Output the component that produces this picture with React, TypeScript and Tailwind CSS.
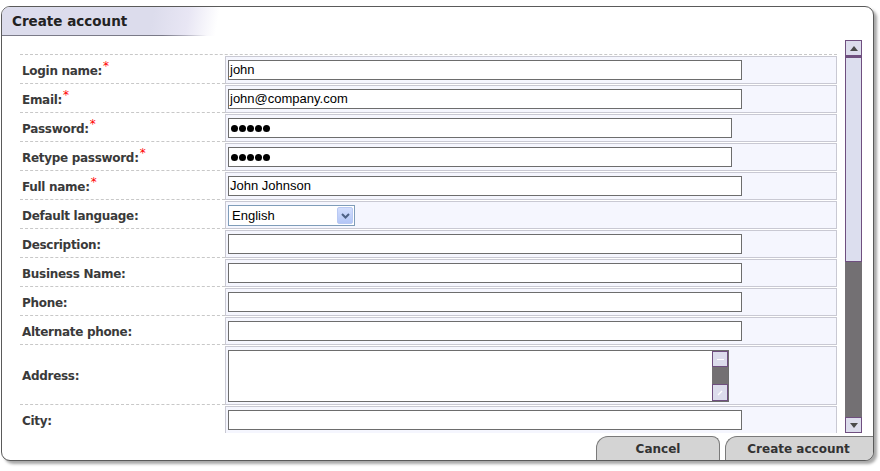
import React from "react";

type Row = {
  label: string;
  req?: boolean;
  kind: "text" | "pw" | "select" | "area";
  value?: string;
  w?: number;
};

const rows: Row[] = [
  { label: "Login name:", req: true, kind: "text", value: "john", w: 514 },
  { label: "Email:", req: true, kind: "text", value: "john@company.com", w: 514 },
  { label: "Password:", req: true, kind: "pw", w: 504 },
  { label: "Retype password:", req: true, kind: "pw", w: 504 },
  { label: "Full name:", req: true, kind: "text", value: "John Johnson", w: 514 },
  { label: "Default language:", kind: "select" },
  { label: "Description:", kind: "text", value: "", w: 514 },
  { label: "Business Name:", kind: "text", value: "", w: 514 },
  { label: "Phone:", kind: "text", value: "", w: 514 },
  { label: "Alternate phone:", kind: "text", value: "", w: 514 },
  { label: "Address:", kind: "area" },
  { label: "City:", kind: "text", value: "", w: 514 },
];

const labelFont = { fontFamily: '"DejaVu Sans", Verdana, sans-serif' };
const inputFont = { fontFamily: '"Liberation Sans", Arial, sans-serif' };

function Field({ row }: { row: Row }) {
  if (row.kind === "text") {
    return (
      <div
        className="h-[20px] border border-[#6d6d6d] bg-white text-[13px] leading-[18px] text-black pl-[1px] overflow-hidden whitespace-nowrap"
        style={{ ...inputFont, width: row.w }}
      >
        {row.value}
      </div>
    );
  }
  if (row.kind === "pw") {
    return (
      <div
        className="h-[20px] border border-[#6d6d6d] bg-white flex items-center gap-[1px] pl-[2px]"
        style={{ width: row.w }}
      >
        {[0, 1, 2, 3, 4].map((i) => (
          <span key={i} className="block w-[7px] h-[7px] rounded-full bg-black" />
        ))}
      </div>
    );
  }
  if (row.kind === "select") {
    return (
      <div className="w-[127px] h-[21px] border border-[#7f9db9] bg-white flex items-center justify-between" style={inputFont}>
        <span className="pl-[3px] text-[13px] text-black leading-[19px]">English</span>
        <span className="mr-[1px] w-[16px] h-[17px] rounded-[2px] border border-[#b9c9f3] bg-gradient-to-b from-[#d3defd] to-[#b3c6f6] flex items-center justify-center">
          <svg width="9" height="6" viewBox="0 0 9 6">
            <path d="M1 1 L4.5 4.5 L8 1" stroke="#4d6185" strokeWidth="2" fill="none" />
          </svg>
        </span>
      </div>
    );
  }
  return (
    <div className="w-[501px] h-[52px] border border-[#6d6d6d] bg-white flex justify-end">
      <div className="w-[16px] h-full bg-[#737073] flex flex-col justify-between">
        <div className="h-[16px] bg-[#dcdcec] border border-[#6f4f7f] flex items-center justify-center">
          <span className="block w-[7px] h-[1px] bg-white" />
        </div>
        <div className="h-[17px] bg-[#dcdcec] border border-[#6f4f7f] flex items-center justify-center">
          <svg width="6" height="6" viewBox="0 0 6 6">
            <path d="M1 5 L5 1" stroke="white" strokeWidth="1.2" />
          </svg>
        </div>
      </div>
    </div>
  );
}

function FormRow({ row }: { row: Row }) {
  const tall = row.kind === "area";
  return (
    <div className={`flex ${tall ? "h-[60px]" : "h-[29px]"}`}>
      <div className="w-[205px] border-b border-dashed border-[#c8c8c8] flex items-center pl-[2px] pt-[3px]">
        <span className="text-[12px] font-bold text-[#3a3a3a] tracking-[-0.3px]" style={labelFont}>
          {row.label}
          {row.req && <span className="text-[#ff0000] text-[12px] font-normal relative top-[-5px] ml-[1px]">*</span>}
        </span>
      </div>
      <div className="flex-1 pt-[1px]">
        <div className={`${tall ? "h-[59px]" : "h-[28px]"} border border-[#c9c9d3] bg-[#f5f6fe] pl-[2px] pt-[3px]`}>
          <Field row={row} />
        </div>
      </div>
    </div>
  );
}

function Triangle({ up }: { up: boolean }) {
  return (
    <svg width="8" height="5" viewBox="0 0 8 5">
      <path d={up ? "M0 5 L4 0 L8 5 Z" : "M0 0 L4 5 L8 0 Z"} fill="#4a4a4a" />
    </svg>
  );
}

export default function App() {
  return (
    <div className="w-[880px] h-[471px] bg-white overflow-hidden">
      <div className="ml-[1px] mt-[6px] w-[873px] h-[455px] rounded-[9px] border border-[#5a5a5a] bg-white overflow-hidden flex flex-col shadow-[3px_3px_3px_rgba(0,0,0,0.35)]">
        {/* header */}
        <div className="relative h-[29px] shrink-0">
          <div className="absolute inset-0 bg-[linear-gradient(100deg,#dcdcec_0px,#dcdcec_150px,#e8e6f4_185px,rgba(255,255,255,0)_215px)]" />
          <div className="absolute left-0 right-0 bottom-0 h-[1px] bg-[linear-gradient(90deg,#7a7a88_0px,#7a7a88_160px,rgba(255,255,255,0)_205px)]" />
          <div className="relative pl-[10px] pt-[5px] text-[13.5px] font-bold text-[#222] leading-[18px]" style={labelFont}>
            Create account
          </div>
        </div>
        {/* body */}
        <div className="h-[397px] shrink-0 flex">
          <div className="w-[835px] pl-[18px] pt-[18px] overflow-hidden">
            <div className="border-t border-dashed border-[#c8c8c8]">
              {rows.map((r) => (
                <FormRow key={r.label} row={r} />
              ))}
            </div>
          </div>
          <div className="ml-[8px] mt-[4px] w-[17px] h-[393px] flex flex-col bg-[#737073]">
            <div className="h-[16px] bg-[#dcdcec] border border-[#6f4f7f] flex items-center justify-center">
              <Triangle up />
            </div>
            <div className="h-[206px] bg-[#dcdeee] border border-[#6f4f7f] border-t-[2px]" />
            <div className="flex-1" />
            <div className="h-[16px] bg-[#dcdcec] border border-[#6f4f7f] flex items-center justify-center">
              <Triangle up={false} />
            </div>
          </div>
        </div>
        {/* footer */}
        <div className="flex-1 flex justify-end items-end gap-[5px]">
          <div
            className="w-[124px] h-[24px] bg-[#d4d4d4] border border-b-0 border-[#7a7a7a] rounded-tl-[12px] rounded-tr-[8px] flex items-center justify-center text-[12px] font-bold text-[#333]"
            style={labelFont}
          >
            Cancel
          </div>
          <div
            className="w-[148px] h-[24px] bg-[#d4d4d4] border border-b-0 border-r-0 border-[#7a7a7a] rounded-tl-[12px] flex items-center justify-center text-[12px] font-bold text-[#333] pr-[2px]"
            style={labelFont}
          >
            Create account
          </div>
        </div>
      </div>
    </div>
  );
}
